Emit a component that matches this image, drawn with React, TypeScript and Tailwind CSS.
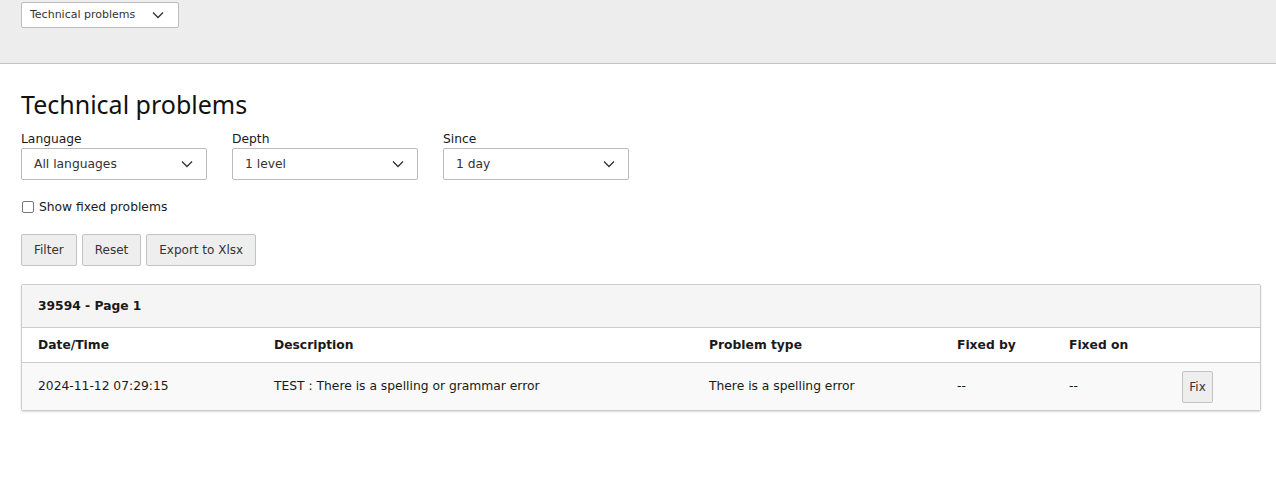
import React from "react";

const Chevron = ({ className = "" }: { className?: string }) => (
  <svg className={className} width="12" height="8" viewBox="0 0 12 8" fill="none">
    <path d="M1 1.5L6 6.5L11 1.5" stroke="#333" strokeWidth="1.3" />
  </svg>
);

function Select({ label, w }: { label: string; w: string }) {
  return (
    <div className={`flex h-[32px] ${w} items-center justify-between rounded-[2px] border border-[#bbbbbb] bg-white pl-[12px] pr-[13px] text-[12.3px] text-[#333]`}>
      <span>{label}</span>
      <Chevron />
    </div>
  );
}

export default function App() {
  return (
    <div className="min-h-[499px] bg-white text-[#1a1a1a]" style={{ fontFamily: '"DejaVu Sans", Verdana, sans-serif' }}>
      <div className="h-[64px] border-b border-[#c3c3c3] bg-[#ededed] pl-[21px] pt-[2px]">
        <div className="flex h-[26px] w-[158px] items-center justify-between rounded-[2px] border border-[#bbbbbb] bg-white pl-[8px] pr-[14px] text-[11px] text-[#333]">
          <span>Technical problems</span>
          <Chevron />
        </div>
      </div>
      <div className="px-[21px] pt-[24px]">
        <h1 className="text-[25px] leading-[32px] text-[#111]" style={{ fontFamily: '"Noto Sans", "Open Sans", sans-serif' }}>
          Technical problems
        </h1>
        <div className="mt-[11px] flex gap-[25px]">
          {[
            ["Language", "All languages"],
            ["Depth", "1 level"],
            ["Since", "1 day"],
          ].map(([l, v]) => (
            <div key={l}>
              <div className="mb-[1px] text-[12.3px] leading-[16px]">{l}</div>
              <Select label={v} w="w-[186px]" />
            </div>
          ))}
        </div>
        <label className="mt-[19px] flex items-center gap-[5px] text-[12.3px] leading-[16px]">
          <span className="ml-[1px] inline-block h-[12px] w-[12px] rounded-[2px] border border-[#777] bg-white" />
          Show fixed problems
        </label>
        <div className="mt-[19px] flex gap-[5px]">
          {["Filter", "Reset", "Export to Xlsx"].map((b) => (
            <button key={b} className="h-[32px] rounded-[2px] border border-[#c3c3c3] bg-[#eeeeee] px-[12px] text-[12px] text-[#333]">
              {b}
            </button>
          ))}
        </div>
        <div className="mt-[18px] w-[1240px] overflow-hidden rounded-[2px] border border-[#cccccc] shadow-[0_1px_2px_rgba(0,0,0,0.15)]">
          <div className="flex h-[43px] items-center border-b border-[#cccccc] bg-[#f5f5f5] pl-[16px] text-[12.3px] font-bold">
            39594 - Page 1
          </div>
          <div className="grid h-[35px] grid-cols-[236px_435px_248px_112px_1fr] items-center border-b border-[#cccccc] bg-white pl-[16px] text-[12.3px] font-bold">
            <div>Date/Time</div>
            <div>Description</div>
            <div>Problem type</div>
            <div>Fixed by</div>
            <div>Fixed on</div>
          </div>
          <div className="grid h-[47px] grid-cols-[236px_435px_248px_112px_113px_1fr] items-center bg-[#f9f9f9] pl-[16px] text-[12.3px]">
            <div>2024-11-12 07:29:15</div>
            <div>TEST : There is a spelling or grammar error</div>
            <div>There is a spelling error</div>
            <div>--</div>
            <div>--</div>
            <div>
              <button className="h-[32px] w-[31px] rounded-[2px] border border-[#c3c3c3] bg-[#eeeeee] text-[12px] text-[#333]">Fix</button>
            </div>
          </div>
        </div>
      </div>
    </div>
  );
}
